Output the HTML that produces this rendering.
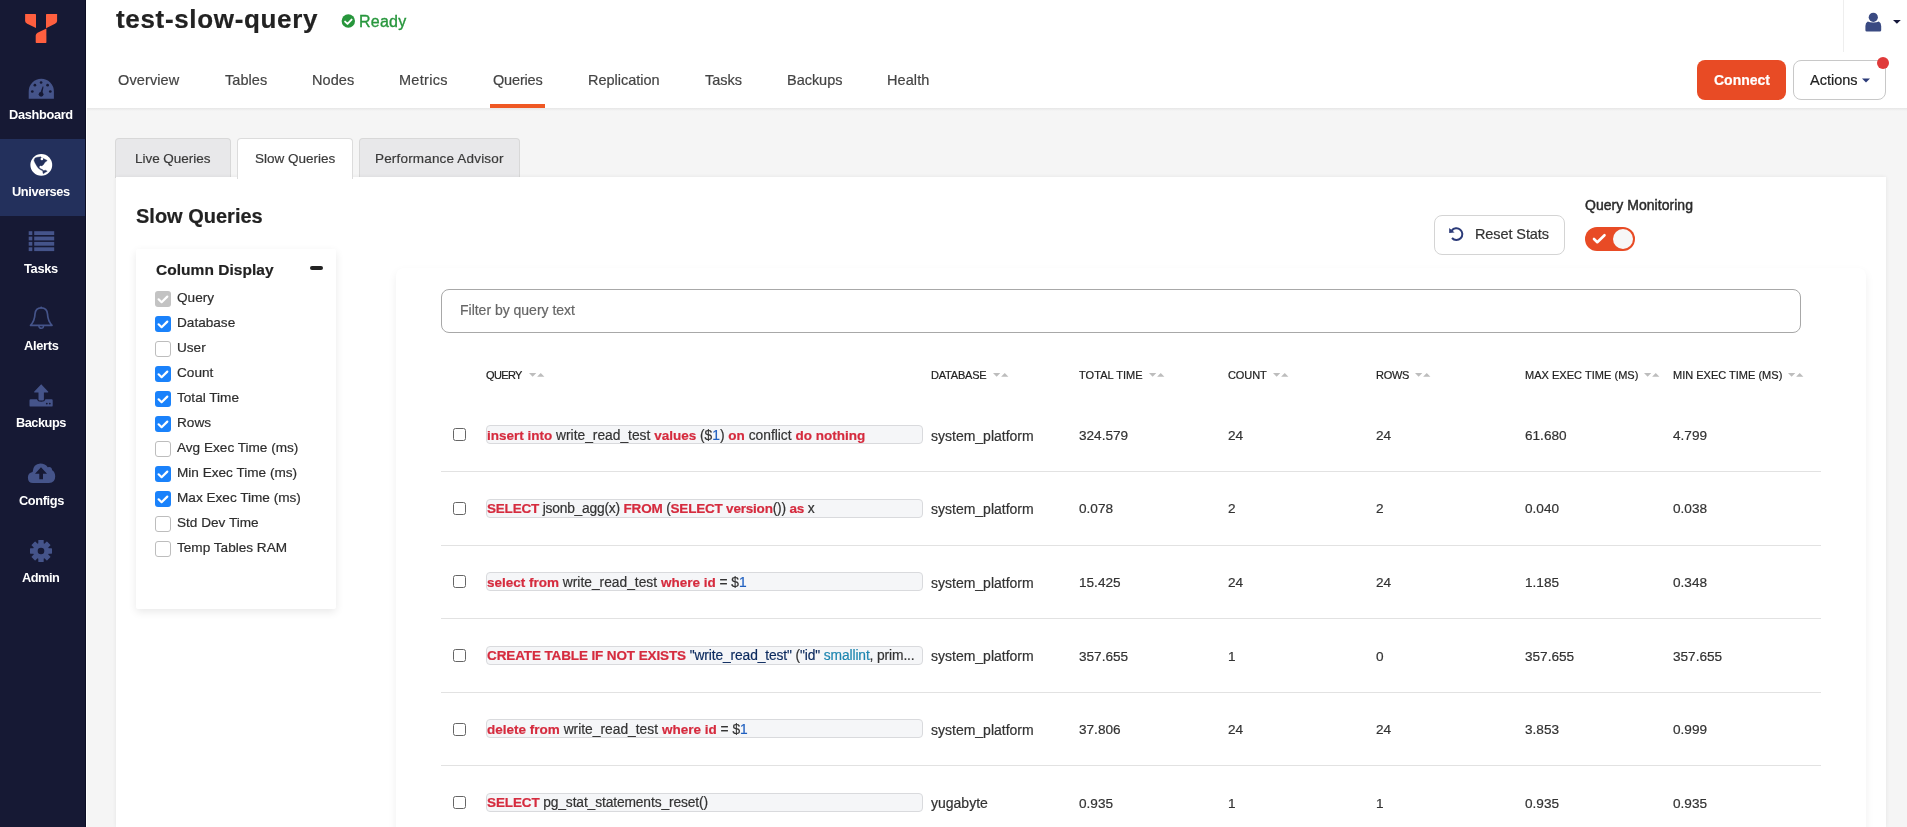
<!DOCTYPE html>
<html><head><meta charset="utf-8"><title>Slow Queries</title>
<style>
html,body{margin:0;padding:0;}
body{width:1907px;height:827px;overflow:hidden;position:relative;background:#F5F5F5;font-family:"Liberation Sans",sans-serif;}
.t{position:absolute;white-space:nowrap;}
.b{position:absolute;}
svg.b{overflow:visible;}
.t{will-change:transform;-webkit-text-stroke:0.2px currentColor;}
</style></head><body>
<div class="b" style="left:0px;top:0px;width:86px;height:827px;background:#161934;"></div>
<div class="b" style="left:85px;top:0px;width:1px;height:827px;background:#0c0e24;"></div>
<div class="b" style="left:86px;top:0px;width:1px;height:827px;background:#fff;"></div>
<div class="b" style="left:0px;top:139px;width:85px;height:77px;background:#23305C;"></div>
<svg class="b" style="left:16px;top:4px" width="50" height="50" viewBox="0 0 50 50"><g fill="#FF5F3F">
<path d="M9.1,10 L19.4,10 Q20,10 20,10.6 L20,24.1 L11.2,19.8 Q9.1,18.7 9.1,17 Z"/>
<path d="M30,10.6 Q30,10 30.6,10 L41.1,10 L41.1,17 Q41.1,18.7 39,19.8 L30,24.3 Z"/>
<path d="M30.4,24.5 L21.6,28.7 Q19.7,29.7 19.7,31.7 L19.7,38.3 Q19.7,39 20.4,39 L29.8,39 Q30.4,39 30.4,38.3 Z"/>
</g></svg>
<svg class="b" style="left:28px;top:78px" width="27" height="22" viewBox="0 0 27 22">
<path fill="#45548A" d="M0.7,20.7 L0.7,13.6 A12.6,12.8 0 0 1 25.9,13.6 L25.9,20.7 Z"/>
<g fill="#161934"><circle cx="13.1" cy="4.5" r="1.35"/><circle cx="6.9" cy="7.2" r="1.35"/><circle cx="19.6" cy="7.2" r="1.35"/>
<circle cx="4.3" cy="13.5" r="1.35"/><circle cx="22.3" cy="13.5" r="1.35"/><circle cx="13.1" cy="16.3" r="2.4"/>
<path d="M12,15.8 L14.6,8.6 Q15.3,8.1 15.5,8.8 L14.2,16.4 Z"/></g></svg>
<svg class="b" style="left:28px;top:152px" width="27" height="27" viewBox="0 0 27 27">
<circle cx="13.3" cy="12.9" r="10.9" fill="#fff"/>
<path fill="#23305C" stroke="#23305C" stroke-width="0.4" stroke-linejoin="round" d="M6.20,7.67 L7.02,6.04 L9.47,5.22 L11.75,4.90 L12.57,4.73 L13.39,5.88 L15.34,6.53 L17.30,7.51 L19.10,8.42 L18.45,9.30 L17.14,9.96 L16.32,11.26 L15.34,12.73 L14.04,13.71 L12.24,14.20 L11.26,15.18 L12.08,16.49 L13.71,17.30 L15.18,18.12 L14.85,18.87 L13.06,18.12 L11.10,16.81 L9.79,15.51 L8.81,13.88 L7.35,11.43 L6.53,9.79 L6.04,8.49 Z"/>
<path fill="#23305C" stroke="#23305C" stroke-width="0.4" stroke-linejoin="round" d="M14.85,18.77 L17.63,18.28 L19.26,19.26 L16.98,20.57 L15.34,21.71 L14.85,20.24 Z"/>
<circle cx="13.88" cy="7.02" r="1.3" fill="#fff"/><circle cx="12.57" cy="14.85" r="1.0" fill="#fff"/></svg>
<svg class="b" style="left:28px;top:231px" width="27" height="21" viewBox="0 0 27 21"><g fill="#45548A">
<rect x="0.7" y="0.2" width="3.6" height="3.8"/><rect x="6.2" y="0.2" width="20" height="3.8"/>
<rect x="0.7" y="5.6" width="3.6" height="3.8"/><rect x="6.2" y="5.6" width="20" height="3.8"/>
<rect x="0.7" y="10.9" width="3.6" height="3.8"/><rect x="6.2" y="10.9" width="20" height="3.8"/>
<rect x="0.7" y="16.3" width="3.6" height="3.8"/><rect x="6.2" y="16.3" width="20" height="3.8"/></g></svg>
<svg class="b" style="left:29px;top:306px" width="25" height="27" viewBox="0 0 25 27">
<path fill="none" stroke="#45548A" stroke-width="1.7" stroke-linejoin="round" d="M12.2,1.8 Q6.5,1.8 6,8 Q5.7,15 1.5,19.3 L23,19.3 Q18.8,15 18.5,8 Q18,1.8 12.2,1.8 Z"/>
<circle cx="12.2" cy="1.6" r="1" fill="#45548A"/>
<path fill="none" stroke="#45548A" stroke-width="1.5" d="M9.9,20 A2.3,2.3 0 0 0 14.5,20"/></svg>
<svg class="b" style="left:29px;top:384px" width="25" height="24" viewBox="0 0 25 24"><g fill="#45548A">
<path d="M12.2,0.3 L19.3,7.7 Q19.5,8.4 18.8,8.4 L14.9,8.4 L14.9,15.5 Q14.9,16.5 13.9,16.5 L10.5,16.5 Q9.5,16.5 9.5,15.5 L9.5,8.4 L5.6,8.4 Q4.9,8.4 5.1,7.7 Z"/>
<path d="M1.6,15.3 L8,15.3 Q8.6,17.8 12.2,17.8 Q15.8,17.8 16.4,15.3 L22.6,15.3 Q23.7,15.3 23.7,16.4 L23.7,21.4 Q23.7,22.6 22.6,22.6 L1.6,22.6 Q0.5,22.6 0.5,21.4 L0.5,16.4 Q0.5,15.3 1.6,15.3 Z"/></g>
<g fill="#161934"><circle cx="17.8" cy="19.6" r="0.9"/><circle cx="20.8" cy="19.6" r="0.9"/></g></svg>
<svg class="b" style="left:27px;top:462px" width="29" height="22" viewBox="0 0 29 22">
<path fill="#45548A" d="M6,21 Q0.9,21 0.9,15.5 Q0.9,10.8 5.6,10 Q6.2,1.8 13.3,1.5 Q18.3,1.5 20.7,5.2 Q24.5,4 25.2,8.2 Q28.2,10 28.2,14.6 Q28.2,21 22,21 Z"/>
<path fill="#161934" d="M14,5.2 L20,11.7 L16,11.7 L16,17.3 L12.3,17.3 L12.3,11.7 L8,11.7 Z"/></svg>
<svg class="b" style="left:30px;top:540px" width="22" height="22" viewBox="0 0 22 22">
<g fill="#45548A"><circle cx="11" cy="11" r="8"/>
<rect x="8.3" y="0" width="5.4" height="22" rx="0.6" transform="rotate(0 11 11)"/><rect x="8.3" y="0" width="5.4" height="22" rx="0.6" transform="rotate(45 11 11)"/><rect x="8.3" y="0" width="5.4" height="22" rx="0.6" transform="rotate(90 11 11)"/><rect x="8.3" y="0" width="5.4" height="22" rx="0.6" transform="rotate(135 11 11)"/>
</g><circle cx="11" cy="11" r="3.3" fill="#161934"/></svg>
<div class="t" style="left:8.80px;top:109.06px;font-size:12.8px;line-height:12.8px;color:#fff;font-weight:bold;letter-spacing:-0.338px;-webkit-text-stroke:0;">Dashboard</div>
<div class="t" style="left:12.00px;top:186.16px;font-size:12.8px;line-height:12.8px;color:#fff;font-weight:bold;letter-spacing:-0.375px;-webkit-text-stroke:0;">Universes</div>
<div class="t" style="left:24.00px;top:263.26px;font-size:12.8px;line-height:12.8px;color:#fff;font-weight:bold;letter-spacing:-0.300px;-webkit-text-stroke:0;">Tasks</div>
<div class="t" style="left:23.80px;top:340.06px;font-size:12.8px;line-height:12.8px;color:#fff;font-weight:bold;letter-spacing:-0.280px;-webkit-text-stroke:0;">Alerts</div>
<div class="t" style="left:15.80px;top:417.26px;font-size:12.8px;line-height:12.8px;color:#fff;font-weight:bold;letter-spacing:-0.500px;-webkit-text-stroke:0;">Backups</div>
<div class="t" style="left:18.50px;top:495.26px;font-size:12.8px;line-height:12.8px;color:#fff;font-weight:bold;letter-spacing:-0.383px;-webkit-text-stroke:0;">Configs</div>
<div class="t" style="left:22.20px;top:572.26px;font-size:12.8px;line-height:12.8px;color:#fff;font-weight:bold;letter-spacing:-0.500px;-webkit-text-stroke:0;">Admin</div>
<div class="b" style="left:87px;top:0px;width:1820px;height:108px;background:#fff;"></div>
<div class="b" style="left:87px;top:108px;width:1820px;height:3px;background:linear-gradient(#e6e6e6,#f5f5f5);"></div>
<div class="t" style="left:116.00px;top:6.49px;font-size:26px;line-height:26px;color:#222;font-weight:bold;letter-spacing:0.664px;">test-slow-query</div>
<svg class="b" style="left:341px;top:14px" width="15" height="15" viewBox="0 0 15 15">
<circle cx="7.3" cy="7" r="6.7" fill="#27963C"/>
<path d="M4.1,7.6 L6.5,9.9 L10.6,5.6" fill="none" stroke="#fff" stroke-width="1.9" stroke-linecap="round" stroke-linejoin="round"/></svg>
<div class="t" style="left:358.90px;top:13.86px;font-size:16px;line-height:16px;color:#27963C;letter-spacing:0.250px;-webkit-text-stroke:0.35px #27963C;">Ready</div>
<div class="t" style="left:118.30px;top:72.63px;font-size:14.5px;line-height:14.5px;color:#444;letter-spacing:0.114px;">Overview</div>
<div class="t" style="left:225.10px;top:72.63px;font-size:14.5px;line-height:14.5px;color:#444;letter-spacing:0.060px;">Tables</div>
<div class="t" style="left:312.20px;top:72.63px;font-size:14.5px;line-height:14.5px;color:#444;letter-spacing:0.075px;">Nodes</div>
<div class="t" style="left:399.20px;top:72.63px;font-size:14.5px;line-height:14.5px;color:#444;letter-spacing:0.283px;">Metrics</div>
<div class="t" style="left:492.60px;top:72.63px;font-size:14.5px;line-height:14.5px;color:#444;letter-spacing:-0.167px;">Queries</div>
<div class="t" style="left:587.70px;top:72.63px;font-size:14.5px;line-height:14.5px;color:#444;letter-spacing:-0.020px;">Replication</div>
<div class="t" style="left:704.80px;top:72.63px;font-size:14.5px;line-height:14.5px;color:#444;letter-spacing:-0.025px;">Tasks</div>
<div class="t" style="left:786.60px;top:72.63px;font-size:14.5px;line-height:14.5px;color:#444;letter-spacing:-0.033px;">Backups</div>
<div class="t" style="left:887.00px;top:72.63px;font-size:14.5px;line-height:14.5px;color:#444;letter-spacing:0.080px;">Health</div>
<div class="b" style="left:490px;top:104px;width:55px;height:4px;background:#EF5824;"></div>
<div class="b" style="left:1843px;top:0px;width:1px;height:52px;background:#eeeeee;"></div>
<svg class="b" style="left:1864px;top:12px" width="18" height="21" viewBox="0 0 18 21"><g fill="#3A4A82">
<circle cx="9.3" cy="5.3" r="4.6"/><path d="M3.8,9.5 Q5.5,10.6 9.3,10.6 Q13,10.6 14.8,9.5 Q17.2,10.8 17.2,14 L17.2,18.2 Q17.2,19.6 15.8,19.6 L2.8,19.6 Q1.4,19.6 1.4,18.2 L1.4,14 Q1.4,10.8 3.8,9.5 Z"/></g></svg>
<svg class="b" style="left:1893px;top:20px" width="8" height="4" viewBox="0 0 8 4"><path d="M0,0 L7.8,0 L3.9,3.8 Z" fill="#15183a"/></svg>
<div class="b" style="left:1697px;top:60px;width:89px;height:40px;background:#E84B25;border-radius:8px;"></div>
<div class="t" style="left:1713.80px;top:73.05px;font-size:14px;line-height:14px;color:#fff;font-weight:bold;letter-spacing:-0.017px;">Connect</div>
<div class="b" style="left:1793px;top:60px;width:93px;height:40px;background:#fff;border:1px solid #c8c8c8;border-radius:8px;box-sizing:border-box;"></div>
<div class="t" style="left:1809.70px;top:72.73px;font-size:14.5px;line-height:14.5px;color:#222;">Actions</div>
<svg class="b" style="left:1862px;top:78px" width="8" height="5" viewBox="0 0 8 5"><path d="M0,0.5 L8,0.5 L4,4.5 Z" fill="#2B3B78"/></svg>
<div class="b" style="left:1877px;top:57px;width:12px;height:12px;background:#E03A3A;border-radius:50%;"></div>
<div class="b" style="left:115px;top:138px;width:116px;height:40px;background:#E8E8EA;border:1px solid #d8d8d8;border-bottom:none;border-radius:4px 4px 0 0;box-sizing:border-box;"></div>
<div class="b" style="left:359px;top:138px;width:161px;height:40px;background:#E8E8EA;border:1px solid #d8d8d8;border-bottom:none;border-radius:4px 4px 0 0;box-sizing:border-box;"></div>
<div class="b" style="left:116px;top:177px;width:1770px;height:650px;background:#fff;box-shadow:0 0 4px rgba(0,0,0,0.07);"></div>
<div class="b" style="left:237px;top:138px;width:116px;height:41px;background:#fff;border:1px solid #dcdcdc;border-bottom:none;border-radius:4px 4px 0 0;box-sizing:border-box;"></div>
<div class="t" style="left:135.30px;top:152.07px;font-size:13.5px;line-height:13.5px;color:#3a3a3a;letter-spacing:-0.036px;">Live Queries</div>
<div class="t" style="left:254.90px;top:152.07px;font-size:13.5px;line-height:13.5px;color:#3a3a3a;letter-spacing:-0.009px;">Slow Queries</div>
<div class="t" style="left:375.40px;top:152.07px;font-size:13.5px;line-height:13.5px;color:#3a3a3a;letter-spacing:0.172px;">Performance Advisor</div>
<div class="t" style="left:136.40px;top:206.17px;font-size:20px;line-height:20px;color:#222;font-weight:bold;">Slow Queries</div>
<div class="b" style="left:1434px;top:215px;width:131px;height:40px;background:#fff;border:1px solid #d4d4d4;border-radius:8px;box-sizing:border-box;"></div>
<svg class="b" style="left:1448px;top:226px" width="16" height="16" viewBox="0 0 16 16">
<path d="M3.7,4.6 A5.9,5.9 0 1 1 4.0,12.0" fill="none" stroke="#2B3A78" stroke-width="2" stroke-linecap="butt"/>
<path d="M1.2,2.1 L1.2,6.9 L6.6,6.5 Z" fill="#2B3A78"/></svg>
<div class="t" style="left:1474.70px;top:227.43px;font-size:14.5px;line-height:14.5px;color:#333;letter-spacing:-0.100px;">Reset Stats</div>
<div class="t" style="left:1585.40px;top:197.95px;font-size:14px;line-height:14px;color:#2a2a2a;letter-spacing:0.040px;-webkit-text-stroke:0.45px #2a2a2a;">Query Monitoring</div>
<div class="b" style="left:1585px;top:227px;width:50px;height:24px;background:#E84B25;border-radius:12px;"></div>
<div class="b" style="left:1613px;top:229px;width:20px;height:20px;background:#f7f7f7;border-radius:50%;"></div>
<svg class="b" style="left:1592px;top:233px" width="15" height="12" viewBox="0 0 15 12"><path d="M2,6 L5.3,9.2 L12.5,2.2" fill="none" stroke="#fff" stroke-width="2.6" stroke-linecap="round" stroke-linejoin="round"/></svg>
<div class="b" style="left:136px;top:249px;width:200px;height:360px;background:#fff;border-radius:2px;box-shadow:0 3px 9px rgba(0,0,0,0.09);"></div>
<div class="t" style="left:155.70px;top:261.78px;font-size:15.5px;line-height:15.5px;color:#222;font-weight:bold;letter-spacing:0.038px;">Column Display</div>
<div class="b" style="left:310px;top:266px;width:13px;height:4px;background:#222;border-radius:2px;"></div>
<div class="b" style="left:155px;top:291px;width:16px;height:16px;background:#C3C3C3;border-radius:3px;"></div>
<svg class="b" style="left:155px;top:291px" width="16" height="16" viewBox="0 0 16 16"><path d="M3.6,8.3 L6.6,11.2 L12.3,5.6" fill="none" stroke="#fff" stroke-width="2.2" stroke-linecap="round" stroke-linejoin="round"/></svg>
<div class="t" style="left:176.80px;top:290.69px;font-size:13.6px;line-height:13.6px;color:#2e2e2e;">Query</div>
<div class="b" style="left:155px;top:316px;width:16px;height:16px;background:#1A82FB;border-radius:3px;"></div>
<svg class="b" style="left:155px;top:316px" width="16" height="16" viewBox="0 0 16 16"><path d="M3.6,8.3 L6.6,11.2 L12.3,5.6" fill="none" stroke="#fff" stroke-width="2.2" stroke-linecap="round" stroke-linejoin="round"/></svg>
<div class="t" style="left:176.80px;top:315.69px;font-size:13.6px;line-height:13.6px;color:#2e2e2e;">Database</div>
<div class="b" style="left:155px;top:341px;width:16px;height:16px;background:#fff;border:1px solid #bdbdbd;border-radius:3px;box-sizing:border-box;"></div>
<div class="t" style="left:176.80px;top:340.69px;font-size:13.6px;line-height:13.6px;color:#2e2e2e;">User</div>
<div class="b" style="left:155px;top:366px;width:16px;height:16px;background:#1A82FB;border-radius:3px;"></div>
<svg class="b" style="left:155px;top:366px" width="16" height="16" viewBox="0 0 16 16"><path d="M3.6,8.3 L6.6,11.2 L12.3,5.6" fill="none" stroke="#fff" stroke-width="2.2" stroke-linecap="round" stroke-linejoin="round"/></svg>
<div class="t" style="left:176.80px;top:365.69px;font-size:13.6px;line-height:13.6px;color:#2e2e2e;">Count</div>
<div class="b" style="left:155px;top:391px;width:16px;height:16px;background:#1A82FB;border-radius:3px;"></div>
<svg class="b" style="left:155px;top:391px" width="16" height="16" viewBox="0 0 16 16"><path d="M3.6,8.3 L6.6,11.2 L12.3,5.6" fill="none" stroke="#fff" stroke-width="2.2" stroke-linecap="round" stroke-linejoin="round"/></svg>
<div class="t" style="left:176.80px;top:390.69px;font-size:13.6px;line-height:13.6px;color:#2e2e2e;">Total Time</div>
<div class="b" style="left:155px;top:416px;width:16px;height:16px;background:#1A82FB;border-radius:3px;"></div>
<svg class="b" style="left:155px;top:416px" width="16" height="16" viewBox="0 0 16 16"><path d="M3.6,8.3 L6.6,11.2 L12.3,5.6" fill="none" stroke="#fff" stroke-width="2.2" stroke-linecap="round" stroke-linejoin="round"/></svg>
<div class="t" style="left:176.80px;top:415.69px;font-size:13.6px;line-height:13.6px;color:#2e2e2e;">Rows</div>
<div class="b" style="left:155px;top:441px;width:16px;height:16px;background:#fff;border:1px solid #bdbdbd;border-radius:3px;box-sizing:border-box;"></div>
<div class="t" style="left:176.80px;top:440.69px;font-size:13.6px;line-height:13.6px;color:#2e2e2e;">Avg Exec Time (ms)</div>
<div class="b" style="left:155px;top:466px;width:16px;height:16px;background:#1A82FB;border-radius:3px;"></div>
<svg class="b" style="left:155px;top:466px" width="16" height="16" viewBox="0 0 16 16"><path d="M3.6,8.3 L6.6,11.2 L12.3,5.6" fill="none" stroke="#fff" stroke-width="2.2" stroke-linecap="round" stroke-linejoin="round"/></svg>
<div class="t" style="left:176.80px;top:465.69px;font-size:13.6px;line-height:13.6px;color:#2e2e2e;">Min Exec Time (ms)</div>
<div class="b" style="left:155px;top:491px;width:16px;height:16px;background:#1A82FB;border-radius:3px;"></div>
<svg class="b" style="left:155px;top:491px" width="16" height="16" viewBox="0 0 16 16"><path d="M3.6,8.3 L6.6,11.2 L12.3,5.6" fill="none" stroke="#fff" stroke-width="2.2" stroke-linecap="round" stroke-linejoin="round"/></svg>
<div class="t" style="left:176.80px;top:490.69px;font-size:13.6px;line-height:13.6px;color:#2e2e2e;">Max Exec Time (ms)</div>
<div class="b" style="left:155px;top:516px;width:16px;height:16px;background:#fff;border:1px solid #bdbdbd;border-radius:3px;box-sizing:border-box;"></div>
<div class="t" style="left:176.80px;top:515.69px;font-size:13.6px;line-height:13.6px;color:#2e2e2e;">Std Dev Time</div>
<div class="b" style="left:155px;top:541px;width:16px;height:16px;background:#fff;border:1px solid #bdbdbd;border-radius:3px;box-sizing:border-box;"></div>
<div class="t" style="left:176.80px;top:540.69px;font-size:13.6px;line-height:13.6px;color:#2e2e2e;">Temp Tables RAM</div>
<div class="b" style="left:396px;top:268px;width:1470px;height:600px;background:#fff;border-radius:8px;box-shadow:0 4px 10px rgba(0,0,0,0.065);"></div>
<div class="b" style="left:441px;top:289px;width:1360px;height:44px;background:#fff;border:1px solid #a8a8a8;border-radius:8px;box-sizing:border-box;"></div>
<div class="t" style="left:459.50px;top:303.25px;font-size:14px;line-height:14px;color:#666;letter-spacing:-0.011px;">Filter by query text</div>
<div class="t" style="left:486.00px;top:369.59px;font-size:11px;line-height:11px;color:#222;letter-spacing:-0.625px;">QUERY</div>
<svg class="b" style="left:528.6px;top:373px" width="16" height="4" viewBox="0 0 16 4"><path d="M0,0 L7.3,0 L3.65,3.8 Z M8.1,3.8 L15.4,3.8 L11.75,0 Z" fill="#BDBDBD"/></svg>
<div class="t" style="left:931.00px;top:369.59px;font-size:11px;line-height:11px;color:#222;letter-spacing:-0.200px;">DATABASE</div>
<svg class="b" style="left:992.9px;top:373px" width="16" height="4" viewBox="0 0 16 4"><path d="M0,0 L7.3,0 L3.65,3.8 Z M8.1,3.8 L15.4,3.8 L11.75,0 Z" fill="#BDBDBD"/></svg>
<div class="t" style="left:1079.40px;top:369.59px;font-size:11px;line-height:11px;color:#222;letter-spacing:0.056px;">TOTAL TIME</div>
<svg class="b" style="left:1149.3px;top:373px" width="16" height="4" viewBox="0 0 16 4"><path d="M0,0 L7.3,0 L3.65,3.8 Z M8.1,3.8 L15.4,3.8 L11.75,0 Z" fill="#BDBDBD"/></svg>
<div class="t" style="left:1227.80px;top:369.59px;font-size:11px;line-height:11px;color:#222;letter-spacing:-0.075px;">COUNT</div>
<svg class="b" style="left:1272.8px;top:373px" width="16" height="4" viewBox="0 0 16 4"><path d="M0,0 L7.3,0 L3.65,3.8 Z M8.1,3.8 L15.4,3.8 L11.75,0 Z" fill="#BDBDBD"/></svg>
<div class="t" style="left:1375.70px;top:369.59px;font-size:11px;line-height:11px;color:#222;letter-spacing:-0.300px;">ROWS</div>
<svg class="b" style="left:1415.2px;top:373px" width="16" height="4" viewBox="0 0 16 4"><path d="M0,0 L7.3,0 L3.65,3.8 Z M8.1,3.8 L15.4,3.8 L11.75,0 Z" fill="#BDBDBD"/></svg>
<div class="t" style="left:1524.50px;top:369.59px;font-size:11px;line-height:11px;color:#222;letter-spacing:0.029px;">MAX EXEC TIME (MS)</div>
<svg class="b" style="left:1644.1px;top:373px" width="16" height="4" viewBox="0 0 16 4"><path d="M0,0 L7.3,0 L3.65,3.8 Z M8.1,3.8 L15.4,3.8 L11.75,0 Z" fill="#BDBDBD"/></svg>
<div class="t" style="left:1672.80px;top:369.59px;font-size:11px;line-height:11px;color:#222;letter-spacing:0.006px;">MIN EXEC TIME (MS)</div>
<svg class="b" style="left:1788.3px;top:373px" width="16" height="4" viewBox="0 0 16 4"><path d="M0,0 L7.3,0 L3.65,3.8 Z M8.1,3.8 L15.4,3.8 L11.75,0 Z" fill="#BDBDBD"/></svg>
<div class="b" style="left:453px;top:428.3px;width:13px;height:13px;background:#fff;border:1px solid #666;border-radius:2.5px;box-sizing:border-box;"></div>
<div class="b" style="left:486px;top:425.2px;width:437px;height:19px;background:#F5F6F8;border:1px solid #d9dadd;border-radius:4px;box-sizing:border-box;"></div>
<div class="t" style="left:486.5px;top:428.72px;font-size:13.8px;line-height:13.8px;letter-spacing:-0.004px;"><span style="color:#D52B3E;font-weight:bold;font-size:13.5px;">insert into</span><span style="color:#333;"> write_read_test </span><span style="color:#D52B3E;font-weight:bold;font-size:13.5px;">values</span><span style="color:#333;"> ($</span><span style="color:#1F5FBF;">1</span><span style="color:#333;">) </span><span style="color:#D52B3E;font-weight:bold;font-size:13.5px;">on</span><span style="color:#333;"> conflict </span><span style="color:#D52B3E;font-weight:bold;font-size:13.5px;">do nothing</span></div>
<div class="t" style="left:931.00px;top:428.55px;font-size:14px;line-height:14px;color:#333;">system_platform</div>
<div class="t" style="left:1079.40px;top:428.89px;font-size:13.6px;line-height:13.6px;color:#333;">324.579</div>
<div class="t" style="left:1227.80px;top:428.89px;font-size:13.6px;line-height:13.6px;color:#333;">24</div>
<div class="t" style="left:1376.00px;top:428.89px;font-size:13.6px;line-height:13.6px;color:#333;">24</div>
<div class="t" style="left:1524.50px;top:428.89px;font-size:13.6px;line-height:13.6px;color:#333;">61.680</div>
<div class="t" style="left:1672.80px;top:428.89px;font-size:13.6px;line-height:13.6px;color:#333;">4.799</div>
<div class="b" style="left:441px;top:471.1px;width:1380px;height:1px;background:#e2e2e2;"></div>
<div class="b" style="left:453px;top:501.9px;width:13px;height:13px;background:#fff;border:1px solid #666;border-radius:2.5px;box-sizing:border-box;"></div>
<div class="b" style="left:486px;top:498.8px;width:437px;height:19px;background:#F5F6F8;border:1px solid #d9dadd;border-radius:4px;box-sizing:border-box;"></div>
<div class="t" style="left:486.5px;top:502.27px;font-size:13.8px;line-height:13.8px;letter-spacing:-0.206px;"><span style="color:#D52B3E;font-weight:bold;font-size:13.5px;">SELECT</span><span style="color:#333;"> jsonb_agg(x) </span><span style="color:#D52B3E;font-weight:bold;font-size:13.5px;">FROM</span><span style="color:#333;"> (</span><span style="color:#D52B3E;font-weight:bold;font-size:13.5px;">SELECT version</span><span style="color:#333;">()) </span><span style="color:#D52B3E;font-weight:bold;font-size:13.5px;">as</span><span style="color:#333;"> x</span></div>
<div class="t" style="left:931.00px;top:502.10px;font-size:14px;line-height:14px;color:#333;">system_platform</div>
<div class="t" style="left:1079.40px;top:502.44px;font-size:13.6px;line-height:13.6px;color:#333;">0.078</div>
<div class="t" style="left:1227.80px;top:502.44px;font-size:13.6px;line-height:13.6px;color:#333;">2</div>
<div class="t" style="left:1376.00px;top:502.44px;font-size:13.6px;line-height:13.6px;color:#333;">2</div>
<div class="t" style="left:1524.50px;top:502.44px;font-size:13.6px;line-height:13.6px;color:#333;">0.040</div>
<div class="t" style="left:1672.80px;top:502.44px;font-size:13.6px;line-height:13.6px;color:#333;">0.038</div>
<div class="b" style="left:441px;top:544.6px;width:1380px;height:1px;background:#e2e2e2;"></div>
<div class="b" style="left:453px;top:575.4px;width:13px;height:13px;background:#fff;border:1px solid #666;border-radius:2.5px;box-sizing:border-box;"></div>
<div class="b" style="left:486px;top:572.3px;width:437px;height:19px;background:#F5F6F8;border:1px solid #d9dadd;border-radius:4px;box-sizing:border-box;"></div>
<div class="t" style="left:486.5px;top:575.82px;font-size:13.8px;line-height:13.8px;letter-spacing:-0.005px;"><span style="color:#D52B3E;font-weight:bold;font-size:13.5px;">select from</span><span style="color:#333;"> write_read_test </span><span style="color:#D52B3E;font-weight:bold;font-size:13.5px;">where id</span><span style="color:#333;"> = $</span><span style="color:#1F5FBF;">1</span></div>
<div class="t" style="left:931.00px;top:575.65px;font-size:14px;line-height:14px;color:#333;">system_platform</div>
<div class="t" style="left:1079.40px;top:575.99px;font-size:13.6px;line-height:13.6px;color:#333;">15.425</div>
<div class="t" style="left:1227.80px;top:575.99px;font-size:13.6px;line-height:13.6px;color:#333;">24</div>
<div class="t" style="left:1376.00px;top:575.99px;font-size:13.6px;line-height:13.6px;color:#333;">24</div>
<div class="t" style="left:1524.50px;top:575.99px;font-size:13.6px;line-height:13.6px;color:#333;">1.185</div>
<div class="t" style="left:1672.80px;top:575.99px;font-size:13.6px;line-height:13.6px;color:#333;">0.348</div>
<div class="b" style="left:441px;top:618.2px;width:1380px;height:1px;background:#e2e2e2;"></div>
<div class="b" style="left:453px;top:649.0px;width:13px;height:13px;background:#fff;border:1px solid #666;border-radius:2.5px;box-sizing:border-box;"></div>
<div class="b" style="left:486px;top:645.9px;width:437px;height:19px;background:#F5F6F8;border:1px solid #d9dadd;border-radius:4px;box-sizing:border-box;"></div>
<div class="t" style="left:486.5px;top:649.37px;font-size:13.8px;line-height:13.8px;letter-spacing:-0.118px;"><span style="color:#D52B3E;font-weight:bold;font-size:13.5px;">CREATE TABLE IF NOT EXISTS</span><span style="color:#0B2A5E;"> "write_read_test"</span><span style="color:#333;"> (</span><span style="color:#0B2A5E;">"id"</span><span style="color:#333;"> </span><span style="color:#1E86B0;">smallint</span><span style="color:#333;">, prim...</span></div>
<div class="t" style="left:931.00px;top:649.20px;font-size:14px;line-height:14px;color:#333;">system_platform</div>
<div class="t" style="left:1079.40px;top:649.54px;font-size:13.6px;line-height:13.6px;color:#333;">357.655</div>
<div class="t" style="left:1227.80px;top:649.54px;font-size:13.6px;line-height:13.6px;color:#333;">1</div>
<div class="t" style="left:1376.00px;top:649.54px;font-size:13.6px;line-height:13.6px;color:#333;">0</div>
<div class="t" style="left:1524.50px;top:649.54px;font-size:13.6px;line-height:13.6px;color:#333;">357.655</div>
<div class="t" style="left:1672.80px;top:649.54px;font-size:13.6px;line-height:13.6px;color:#333;">357.655</div>
<div class="b" style="left:441px;top:691.8px;width:1380px;height:1px;background:#e2e2e2;"></div>
<div class="b" style="left:453px;top:722.5px;width:13px;height:13px;background:#fff;border:1px solid #666;border-radius:2.5px;box-sizing:border-box;"></div>
<div class="b" style="left:486px;top:719.4px;width:437px;height:19px;background:#F5F6F8;border:1px solid #d9dadd;border-radius:4px;box-sizing:border-box;"></div>
<div class="t" style="left:486.5px;top:722.92px;font-size:13.8px;line-height:13.8px;letter-spacing:0.004px;"><span style="color:#D52B3E;font-weight:bold;font-size:13.5px;">delete from</span><span style="color:#333;"> write_read_test </span><span style="color:#D52B3E;font-weight:bold;font-size:13.5px;">where id</span><span style="color:#333;"> = $</span><span style="color:#1F5FBF;">1</span></div>
<div class="t" style="left:931.00px;top:722.75px;font-size:14px;line-height:14px;color:#333;">system_platform</div>
<div class="t" style="left:1079.40px;top:723.09px;font-size:13.6px;line-height:13.6px;color:#333;">37.806</div>
<div class="t" style="left:1227.80px;top:723.09px;font-size:13.6px;line-height:13.6px;color:#333;">24</div>
<div class="t" style="left:1376.00px;top:723.09px;font-size:13.6px;line-height:13.6px;color:#333;">24</div>
<div class="t" style="left:1524.50px;top:723.09px;font-size:13.6px;line-height:13.6px;color:#333;">3.853</div>
<div class="t" style="left:1672.80px;top:723.09px;font-size:13.6px;line-height:13.6px;color:#333;">0.999</div>
<div class="b" style="left:441px;top:765.3px;width:1380px;height:1px;background:#e2e2e2;"></div>
<div class="b" style="left:453px;top:796.0px;width:13px;height:13px;background:#fff;border:1px solid #666;border-radius:2.5px;box-sizing:border-box;"></div>
<div class="b" style="left:486px;top:792.9px;width:437px;height:19px;background:#F5F6F8;border:1px solid #d9dadd;border-radius:4px;box-sizing:border-box;"></div>
<div class="t" style="left:486.5px;top:796.47px;font-size:13.8px;line-height:13.8px;letter-spacing:-0.124px;"><span style="color:#D52B3E;font-weight:bold;font-size:13.5px;">SELECT</span><span style="color:#333;"> pg_stat_statements_reset()</span></div>
<div class="t" style="left:931.00px;top:796.30px;font-size:14px;line-height:14px;color:#333;">yugabyte</div>
<div class="t" style="left:1079.40px;top:796.64px;font-size:13.6px;line-height:13.6px;color:#333;">0.935</div>
<div class="t" style="left:1227.80px;top:796.64px;font-size:13.6px;line-height:13.6px;color:#333;">1</div>
<div class="t" style="left:1376.00px;top:796.64px;font-size:13.6px;line-height:13.6px;color:#333;">1</div>
<div class="t" style="left:1524.50px;top:796.64px;font-size:13.6px;line-height:13.6px;color:#333;">0.935</div>
<div class="t" style="left:1672.80px;top:796.64px;font-size:13.6px;line-height:13.6px;color:#333;">0.935</div>
</body></html>
